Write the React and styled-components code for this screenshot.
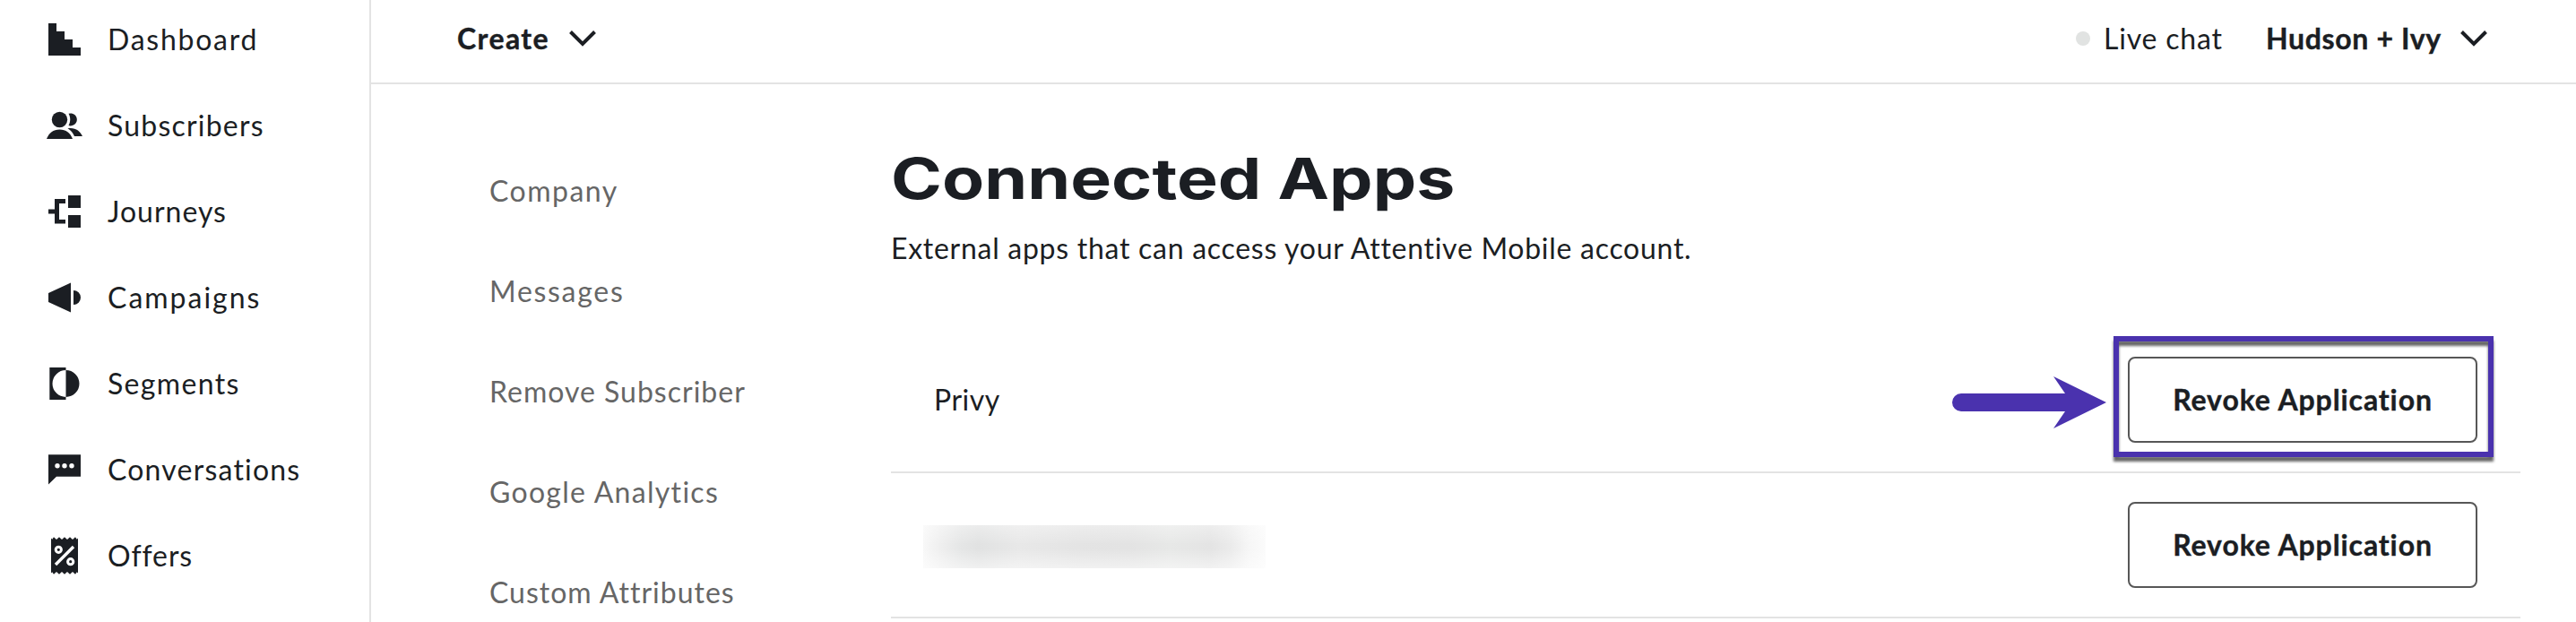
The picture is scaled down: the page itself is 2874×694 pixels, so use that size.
import React from "react";
import styled, { createGlobalStyle } from "styled-components";

const Global = createGlobalStyle`
  * { box-sizing: border-box; }
  body { margin: 0; background: #fff; color: #1b1e23; font-family: Lato, "Open Sans", sans-serif; font-size: 32px; line-height: 40px; }
  h1, p { margin: 0; }
  button { font: inherit; color: inherit; background: none; border: 0; padding: 0; }
`;

const Page = styled.div`
  display: flex;
  width: 2874px;
  height: 694px;
  overflow: hidden;
`;

const Sidebar = styled.nav`
  flex: none;
  width: 414px;
  border-right: 2px solid #e3e3e3;
`;

const SideList = styled.div`
  margin-top: -4px;
`;

const SideItem = styled.div`
  display: flex;
  align-items: center;
  height: 96px;
  padding-left: 48px;
  gap: 24px;
`;

const Icon = styled.svg`
  flex: none;
  display: block;
  width: 48px;
  height: 48px;
  fill: currentColor;
`;

const Label = styled.span`
  display: block;
  white-space: nowrap;
  font-weight: ${(p) => (p.$bold ? 700 : 400)};
  -webkit-text-stroke: ${(p) => (p.$bold ? 0.4 : 0)}px currentColor;
  letter-spacing: ${(p) => p.$track || 0}px;
`;

const Main = styled.div`
  flex: 1;
  min-width: 0;
`;

const TopBar = styled.header`
  display: flex;
  align-items: center;
  justify-content: space-between;
  height: 94px;
  padding: 0 99px 6px 96px;
  border-bottom: 2px solid #e3e3e3;
`;

const Group = styled.div`
  display: flex;
  align-items: center;
`;

const MenuButton = styled.button`
  display: flex;
  align-items: center;
  justify-content: space-between;
  width: ${(p) => p.$width}px;
`;

const LiveChat = styled.div`
  display: flex;
  align-items: center;
  gap: 15px;
  width: 212px;
`;

const StatusDot = styled.span`
  width: 16px;
  height: 16px;
  border-radius: 50%;
  background: #e1e3e2;
`;

const ChevronSvg = styled.svg`
  display: block;
  width: 30px;
  height: 18px;
  fill: none;
  stroke: currentColor;
  stroke-width: 4;
`;

const Body = styled.div`
  display: flex;
`;

const Settings = styled.nav`
  flex: none;
  width: 580px;
  padding: 63px 0 0 132px;
  color: #666;
`;

const SettingsItem = styled.div`
  display: flex;
  align-items: center;
  height: 112px;
`;

const Content = styled.main`
  width: 1818px;
`;

const Title = styled.h1`
  width: max-content;
  height: 72px;
  margin-top: 68px;
  font-family: Inter, sans-serif;
  font-weight: 700;
  font-size: 63px;
  line-height: 74px;
  white-space: nowrap;
  transform: scaleX(1.223);
  transform-origin: 0 0;
`;

const Intro = styled.p`
  height: 132px;
  padding-top: 23px;
`;

const AppRow = styled.div`
  display: flex;
  align-items: center;
  justify-content: space-between;
  height: 162px;
  padding: 0 48px;
  border-bottom: 2px solid #e3e3e3;
`;

const RevokeButton = styled.button`
  display: flex;
  align-items: center;
  justify-content: center;
  width: 390px;
  height: 96px;
  border: 2px solid #575757;
  border-radius: 8px;
`;

const Anchor = styled.div`
  position: relative;
`;

const Highlight = styled.div`
  position: absolute;
  left: -16px;
  top: -23px;
  width: 424px;
  height: 135px;
  border: 6px solid #4a32ae;
  filter: drop-shadow(0 5px 1.5px rgba(0, 0, 0, 0.6));
`;

const Arrow = styled.svg`
  position: absolute;
  left: -196px;
  top: 22px;
  width: 172px;
  height: 58px;
  fill: #4a32ae;
`;

const Redacted = styled.div`
  width: 382px;
  height: 48px;
  margin: 4px 0 0 -12px;
  background:
    linear-gradient(180deg, rgba(255, 255, 255, 0.35), transparent 45%, transparent 55%, rgba(255, 255, 255, 0.5)),
    linear-gradient(90deg, #f8f8f8 0, #efefef 5%, #e5e6e6 11%, #e1e2e2 16%, #e8e8e8 28%, #e4e4e4 45%, #e3e3e3 60%, #e7e8e7 72%, #e4e4e4 84%, #ebebeb 90%, #f6f6f6 95%, #fbfbfb 100%);
`;

const icons = {
  dashboard: <path d="M6 6h9v9h9v9h9v9h9v9H6z" />,
  subscribers: (
    <>
      <circle cx="18.5" cy="17.5" r="8.7" />
      <path d="M4 39c2.500-6.500 7.500-10.500 14.500-10.500S30.500 32.500 33 39z" />
      <path d="M28.500 10.800a7 7 0 1 1 0 13.200c2.400-4 2.400-9.200 0-13.200z" />
      <path d="M27.500 27.300c8-1.500 14 2.700 16.500 8.700h-9c-1.500-3.500-4-6.700-7.500-8.700z" />
    </>
  ),
  journeys: (
    <path d="M28 6h14v14H28zM28 28h14v14H28zM6 21.500h7V10h12v5h-7v18h7v4.500H13V26.500H6z" />
  ),
  campaigns: <path d="M6 19L31 7.500v33L6 29zM34 16a8 8 0 0 1 0 16z" />,
  segments: (
    <path d="M7.300 6H25.500V9a15 15 0 0 0 0 30V42H7.300zM25.500 9a15 15 0 0 1 0 30z" />
  ),
  conversations: (
    <>
      <path d="M6 7.300h36v24.400H15L6 40.500z" />
      <g fill="#fff">
        <circle cx="16" cy="19.700" r="2.700" />
        <circle cx="24" cy="19.700" r="2.700" />
        <circle cx="32" cy="19.700" r="2.700" />
      </g>
    </>
  ),
  offers: (
    <>
      <path d="M9 4.500L10.200 5.700 12 3.300 15 6 18 3.300 21 6 24 3.300 27 6 30 3.300 33 6 36 3.300 37.800 5.700 39 4.500V43.500L37.800 42.300 36 44.700 33 42 30 44.700 27 42 24 44.700 21 42 18 44.700 15 42 12 44.700 10.200 42.300 9 43.500z" />
      <g fill="none" stroke="#fff">
        <circle cx="17.300" cy="17.300" r="3.100" strokeWidth="3" />
        <circle cx="30.700" cy="30.700" r="3.100" strokeWidth="3" />
        <path d="M14 34L34 14" strokeWidth="3.400" />
      </g>
    </>
  ),
};

const sideItems = [
  ["dashboard", "Dashboard", 1.75],
  ["subscribers", "Subscribers", 1.2],
  ["journeys", "Journeys", 1],
  ["campaigns", "Campaigns", 2],
  ["segments", "Segments", 1.35],
  ["conversations", "Conversations", 1.2],
  ["offers", "Offers", 0.9],
];

const settingsItems = [
  ["Company", 1.5],
  ["Messages", 1.7],
  ["Remove Subscriber", 1],
  ["Google Analytics", 1.3],
  ["Custom Attributes", 1],
];

const Chevron = () => (
  <ChevronSvg viewBox="0 0 30 18">
    <path d="M1.500 1.500L15 15L28.500 1.500" />
  </ChevronSvg>
);

const Revoke = () => (
  <RevokeButton>
    <Label $bold $track={0.9}>Revoke Application</Label>
  </RevokeButton>
);

export default function App() {
  return (
    <>
      <Global />
      <Page>
        <Sidebar>
          <SideList>
            {sideItems.map(([icon, text, track]) => (
              <SideItem key={text}>
                <Icon viewBox="0 0 48 48">{icons[icon]}</Icon>
                <Label $track={track}>{text}</Label>
              </SideItem>
            ))}
          </SideList>
        </Sidebar>
        <Main>
          <TopBar>
            <MenuButton $width={155}>
              <Label $bold $track={1.4}>Create</Label>
              <Chevron />
            </MenuButton>
            <Group>
              <LiveChat>
                <StatusDot />
                <Label $track={0.8}>Live chat</Label>
              </LiveChat>
              <MenuButton $width={247}>
                <Label $bold $track={0.65}>Hudson + Ivy</Label>
                <Chevron />
              </MenuButton>
            </Group>
          </TopBar>
          <Body>
            <Settings>
              {settingsItems.map(([text, track]) => (
                <SettingsItem key={text}>
                  <Label $track={track}>{text}</Label>
                </SettingsItem>
              ))}
            </Settings>
            <Content>
              <Title>Connected Apps</Title>
              <Intro>
                <Label $track={0.72}>External apps that can access your Attentive Mobile account.</Label>
              </Intro>
              <AppRow>
                <Label $track={0.5}>Privy</Label>
                <Anchor>
                  <Revoke />
                  <Highlight />
                  <Arrow viewBox="0 0 172 58">
                    <path d="M10 19H126L113 0L172 29L113 58L126 39H10A10 10 0 0 1 10 19z" />
                  </Arrow>
                </Anchor>
              </AppRow>
              <AppRow>
                <Redacted />
                <Revoke />
              </AppRow>
            </Content>
          </Body>
        </Main>
      </Page>
    </>
  );
}
